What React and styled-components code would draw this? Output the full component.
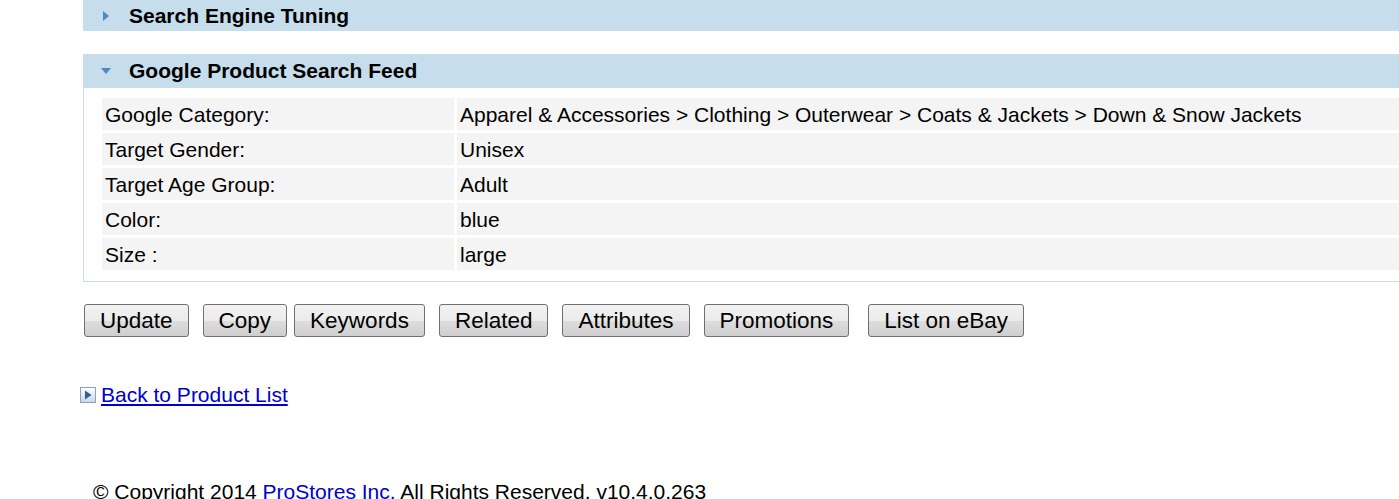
import React from 'react';
import styled, { createGlobalStyle } from 'styled-components';

const GlobalStyle = createGlobalStyle`
  html, body {
    margin: 0;
    padding: 0;
    background: #ffffff;
    overflow: hidden;
  }
  body {
    font-family: "Liberation Sans", Arial, sans-serif;
    color: #000000;
  }
`;

const feedRows = [
  { label: 'Google Category:', value: 'Apparel & Accessories > Clothing > Outerwear > Coats & Jackets > Down & Snow Jackets' },
  { label: 'Target Gender:', value: 'Unisex' },
  { label: 'Target Age Group:', value: 'Adult' },
  { label: 'Color:', value: 'blue' },
  { label: 'Size :', value: 'large' },
];

const buttons = [
  { text: 'Update', gap: 0 },
  { text: 'Copy', gap: 14 },
  { text: 'Keywords', gap: 7 },
  { text: 'Related', gap: 14 },
  { text: 'Attributes', gap: 14 },
  { text: 'Promotions', gap: 14 },
  { text: 'List on eBay', gap: 19 },
];

function Arrow({ open }) {
  if (open) {
    return (
      <svg width="12" height="8" viewBox="0 0 12 8">
        <path d="M1 1 L11 1 L6 7 Z" fill="#4f86c6" />
      </svg>
    );
  }
  return (
    <svg width="8" height="12" viewBox="0 0 8 12">
      <path d="M1 1 L7 6 L1 11 Z" fill="#4f86c6" />
    </svg>
  );
}

function LinkIcon() {
  return (
    <svg width="16" height="16" viewBox="0 0 16 16">
      <defs>
        <linearGradient id="lg" x1="0" y1="0" x2="0" y2="1">
          <stop offset="0" stopColor="#ffffff" />
          <stop offset="1" stopColor="#c9d6e6" />
        </linearGradient>
      </defs>
      <rect x="0.5" y="0.5" width="15" height="15" fill="url(#lg)" stroke="#8aa2c0" />
      <path d="M5 3.5 L11.5 8 L5 12.5 Z" fill="#2e5f9c" />
    </svg>
  );
}

const App = () => {
  return (
    <Page>
      <GlobalStyle />
      <Section>
        <Header $h={31}>
          <ArrowBox><Arrow /></ArrowBox>
          Search Engine Tuning
        </Header>
      </Section>

      <Section $top={23}>
        <Header $h={34}>
          <ArrowBox><Arrow open /></ArrowBox>
          Google Product Search Feed
        </Header>
        <Panel>
          <FeedGrid>
            {feedRows.map((r) => (
              <React.Fragment key={r.label}>
                <Cell>{r.label}</Cell>
                <Cell>{r.value}</Cell>
              </React.Fragment>
            ))}
          </FeedGrid>
        </Panel>
      </Section>

      <ButtonRow>
        {buttons.map((b) => (
          <Button key={b.text} $gap={b.gap}>{b.text}</Button>
        ))}
      </ButtonRow>

      <BackRow>
        <LinkIcon />
        <BackLink href="#">Back to Product List</BackLink>
      </BackRow>

      <Footer>
        © Copyright 2014 <FooterLink>ProStores Inc.</FooterLink> All Rights Reserved. v10.4.0.263
      </Footer>
    </Page>
  );
};

const Page = styled.div`
  width: 1400px;
  padding-left: 83px;
  font-size: 21px;
`;

const Section = styled.div`
  margin-top: ${(p) => p.$top || 0}px;
`;

const Header = styled.div`
  display: flex;
  align-items: center;
  height: ${(p) => p.$h}px;
  background: #c6ddeb;
  font-weight: bold;
  font-size: 21px;
  padding-left: 17px;
`;

const ArrowBox = styled.span`
  display: inline-flex;
  justify-content: center;
  width: 12px;
  margin-right: 17px;
`;

const Panel = styled.div`
  border: 1px solid #c9dde6;
  border-top: none;
  border-right: none;
  padding: 10px 0 11px 18px;
`;

const FeedGrid = styled.div`
  display: grid;
  grid-template-columns: 352px 1fr;
  gap: 3px;
`;

const Cell = styled.div`
  background: #f4f4f4;
  height: 32px;
  line-height: 33px;
  padding-left: 3px;
  white-space: nowrap;
`;

const ButtonRow = styled.div`
  display: flex;
  margin-top: 22px;
  padding-left: 1px;
`;

const Button = styled.button`
  margin-left: ${(p) => p.$gap}px;
  height: 33px;
  padding: 0 15px;
  font-family: "Liberation Sans", Arial, sans-serif;
  font-size: 22.5px;
  color: #000000;
  border: 1px solid #707070;
  border-radius: 3px;
  background: linear-gradient(to bottom, #f2f2f2 0%, #ebebeb 50%, #dddddd 51%, #cfcfcf 100%);
`;

const BackRow = styled.div`
  display: flex;
  align-items: center;
  gap: 5px;
  margin-top: 46px;
  margin-left: -3px;
`;

const BackLink = styled.a`
  color: #0000cc;
  text-decoration: underline;
  font-size: 21px;
`;

const Footer = styled.div`
  margin-top: 73px;
  padding-left: 10px;
  font-size: 21px;
  white-space: nowrap;
`;

const FooterLink = styled.span`
  color: #0000cc;
`;

export default App;
